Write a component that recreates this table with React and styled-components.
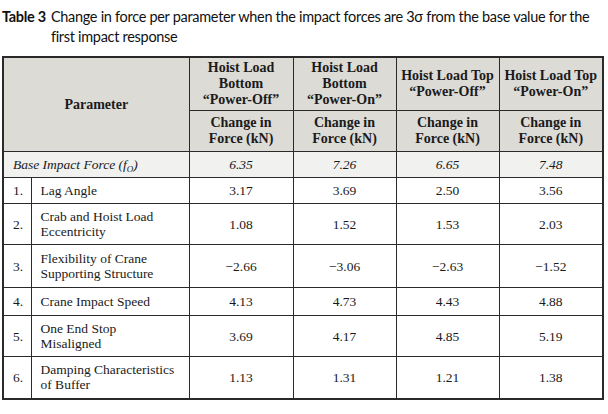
import React from "react";
import styled, { createGlobalStyle } from "styled-components";

const Global = createGlobalStyle`
  html, body { margin: 0; padding: 0; background: #ffffff; }
  body { width: 608px; height: 414px; overflow: hidden; }
`;

const Page = styled.div`
  padding: 7px 6px 0 2px;
`;

const Caption = styled.div`
  font-family: Lato, "Open Sans", sans-serif;
  font-size: 14.5px;
  letter-spacing: -0.3px;
  line-height: 20px;
  color: #111;
  display: flex;
`;

const CaptionLabel = styled.span`
  font-weight: 700;
  white-space: nowrap;
  margin-right: 5px;
`;

const Table = styled.table`
  margin-top: 9px;
  width: 600px;
  border-collapse: collapse;
  table-layout: fixed;
  font-family: "Liberation Serif", "DejaVu Serif", serif;
  font-size: 13.5px;
  line-height: 15px;
  color: #1a1a1a;
  border: 2px solid #2a2a2a;
`;

const Th = styled.th`
  background: #dcdbd6;
  border: 1px solid #2a2a2a;
  font-weight: 700;
  font-size: 14px;
  line-height: 16px;
  text-align: center;
  vertical-align: middle;
  padding: 2px 2px;
  height: ${(p) => p.$h || "auto"};
  box-sizing: border-box;
`;

const Row = styled.tr`
  background: ${(p) => (p.$shade ? "#f1f1ef" : "#ffffff")};
  height: ${(p) => p.$h};
`;

const Td = styled.td`
  border: 1px solid #2a2a2a;
  padding: 0 4px 0 ${(p) => (p.$left ? "9px" : "4px")};
  text-align: ${(p) => (p.$left ? "left" : "center")};
  vertical-align: middle;
  font-style: ${(p) => (p.$italic ? "italic" : "normal")};
`;

const Sub = styled.sub`
  font-size: 9px;
  vertical-align: -3px;
  line-height: 0;
`;

const cols = [
  { top: ["Hoist Load", "Bottom", "\u201cPower-Off\u201d"] },
  { top: ["Hoist Load", "Bottom", "\u201cPower-On\u201d"] },
  { top: ["Hoist Load Top", "\u201cPower-Off\u201d"] },
  { top: ["Hoist Load Top", "\u201cPower-On\u201d"] },
];

const rows = [
  { n: "1.", name: ["Lag Angle"], v: ["3.17", "3.69", "2.50", "3.56"], h: "26px" },
  { n: "2.", name: ["Crab and Hoist Load", "Eccentricity"], v: ["1.08", "1.52", "1.53", "2.03"], h: "41px" },
  { n: "3.", name: ["Flexibility of Crane", "Supporting Structure"], v: ["\u22122.66", "\u22123.06", "\u22122.63", "\u22121.52"], h: "43px" },
  { n: "4.", name: ["Crane Impact Speed"], v: ["4.13", "4.73", "4.43", "4.88"], h: "28px" },
  { n: "5.", name: ["One End Stop", "Misaligned"], v: ["3.69", "4.17", "4.85", "5.19"], h: "41px" },
  { n: "6.", name: ["Damping Characteristics", "of Buffer"], v: ["1.13", "1.31", "1.21", "1.38"], h: "42px" },
];

const lines = (arr) =>
  arr.map((t, i) => (
    <React.Fragment key={i}>
      {i > 0 && <br />}
      {t}
    </React.Fragment>
  ));

export default function App() {
  return (
    <Page>
      <Global />
      <Caption>
        <CaptionLabel>Table 3</CaptionLabel>
        <span>
          Change in force per parameter when the impact forces are 3σ from the base value for the first impact response
        </span>
      </Caption>
      <Table>
        <colgroup>
          <col style={{ width: "28px" }} />
          <col style={{ width: "158px" }} />
          <col style={{ width: "104px" }} />
          <col style={{ width: "103px" }} />
          <col style={{ width: "103px" }} />
          <col style={{ width: "104px" }} />
        </colgroup>
        <thead>
          <tr>
            <Th colSpan={2} rowSpan={2}>Parameter</Th>
            {cols.map((c, i) => (
              <Th key={i} $h="53px">{lines(c.top)}</Th>
            ))}
          </tr>
          <tr>
            {cols.map((c, i) => (
              <Th key={i} $h="41px">{lines(["Change in", "Force (kN)"])}</Th>
            ))}
          </tr>
        </thead>
        <tbody>
          <Row $shade $h="26px">
            <Td colSpan={2} $left $italic>
              Base Impact Force (<i>f</i><Sub>O</Sub>)
            </Td>
            {["6.35", "7.26", "6.65", "7.48"].map((v, i) => (
              <Td key={i} $italic>{v}</Td>
            ))}
          </Row>
          {rows.map((r) => (
            <Row key={r.n} $h={r.h}>
              <Td $left>{r.n}</Td>
              <Td $left>{lines(r.name)}</Td>
              {r.v.map((v, i) => (
                <Td key={i}>{v}</Td>
              ))}
            </Row>
          ))}
        </tbody>
      </Table>
    </Page>
  );
}
